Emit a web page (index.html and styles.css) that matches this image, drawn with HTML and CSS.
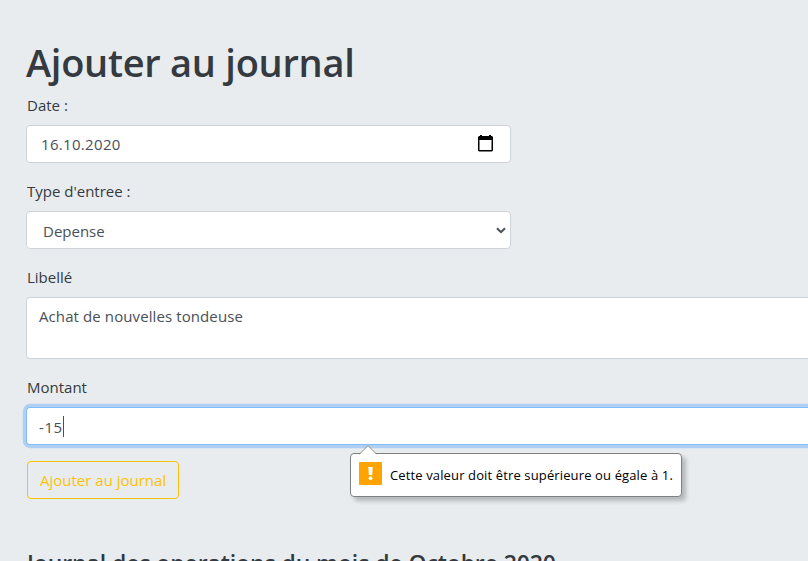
FILE: index.html
```html
<!DOCTYPE html>
<html lang="fr">
<head>
<meta charset="utf-8">
<title>Journal</title>
<link rel="stylesheet" href="styles.css">
</head>
<body>
<main class="page">
  <h1 class="title"><span>Ajouter au journal</span></h1>
  <div class="group">
    <div class="label"><span>Date :</span></div>
    <div class="control half date"><span class="t-value">16.10.2020</span>
      <svg class="calendar" width="15" height="17" viewBox="0 0 15 17"><path d="M2 0h2v1h7V0h2v1h1l1 1v13.5l-1 1H1l-1-1V2l1-1h1zM1.5 5v10h12V5z" fill="#000" fill-rule="evenodd"/></svg>
    </div>
  </div>
  <div class="group">
    <div class="label"><span>Type d'entree :</span></div>
    <div class="control half select"><span class="t-option">Depense</span>
      <svg class="chevron" width="10" height="7" viewBox="0 0 10 7"><path d="M1 1.2l4 4 4-4" fill="none" stroke="#495057" stroke-width="2"/></svg>
    </div>
  </div>
  <div class="group">
    <div class="label"><span>Libellé</span></div>
    <div class="control wide area"><span class="t-area">Achat de nouvelles tondeuse</span></div>
  </div>
  <div class="group">
    <div class="label"><span>Montant</span></div>
    <div class="control wide focused"><span class="t-amount">-15</span><i class="caret"></i>
      <div class="bubble">
        <svg class="arrow" width="18" height="10" viewBox="0 0 18 10"><path d="M0 10L9 1l9 9z" fill="#fff"/><path d="M.5 9L9 .7 17.5 9" fill="none" stroke="#808080" stroke-opacity=".8"/></svg>
        <svg class="warn" width="23" height="23" viewBox="0 0 23 23"><rect width="23" height="23" rx="1" fill="#ffa300"/><path d="M9.3 5h4.4l-.5 8H9.8z" fill="#fff"/><circle cx="11.5" cy="16.2" r="1.9" fill="#fff"/></svg>
        <span class="t-bubble">Cette valeur doit être supérieure ou égale à 1.</span>
      </div>
    </div>
  </div>
  <button class="submit"><span>Ajouter au journal</span></button>
  <h4 class="subtitle"><span>Journal des operations du mois de Octobre 2020</span></h4>
</main>
</body>
</html>
```
FILE: styles.css
```css
* { box-sizing: border-box; }
html { overflow: hidden; }
body {
  margin: 0;
  height: 561px;
  overflow: hidden;
  background: #e8ecef;
  color: #343a40;
  font: 15px/24px "Open Sans", "Noto Sans", sans-serif;
}
.page { height: 561px; overflow: hidden; padding: 37px 0 0 26px; }
.title { margin: 0 0 8px; font-size: 38px; line-height: 51px; height: 48px; font-weight: 600; letter-spacing: -.27px; }
.group { margin-bottom: 16px; }
.label { height: 24px; margin-bottom: 8px; padding-left: 1px; }
.control {
  position: relative;
  display: flex;
  align-items: center;
  height: 38px;
  padding: 0 12px;
  border: 1px solid #ced4da;
  border-radius: 4px;
  background: #fff;
  color: #495057;
}
.half { width: 485px; justify-content: space-between; }
.wide { border-right: 0; border-radius: 4px 0 0 4px; }
.date { padding: 0 17px 0 14px; }
.t-value { letter-spacing: .32px; }
.t-option { position: relative; top: 1px; }
.t-amount { position: relative; top: 1px; letter-spacing: .6px; }
.t-area { letter-spacing: .1px; }
.calendar { margin-top: -2px; }
.select { padding: 0 4px 0 16px; }
.area { height: 62px; align-items: flex-start; padding-top: 6px; }
.focused { border-color: #80bdff; box-shadow: 0 0 0 3.2px #b0cff3; }
.caret { width: 1px; height: 21px; background: #495057; }
.bubble {
  position: absolute;
  left: 323px;
  top: 45px;
  display: flex;
  align-items: center;
  width: 332px;
  height: 44px;
  padding: 0 8px 4px;
  gap: 8px;
  border: 1px solid #808080;
  border-radius: 4px;
  background: #fff;
  box-shadow: 4px 4px 4px rgba(0, 0, 0, .22);
  color: #000;
  font-size: 13px;
  letter-spacing: .13px;
  white-space: nowrap;
}
.arrow { position: absolute; left: 8px; top: -9px; }
.t-bubble { position: relative; top: 2px; }
.submit {
  display: block;
  width: 152px;
  height: 38px;
  margin: 0 0 0 1px;
  padding: 0 0 0 12px;
  border: 1px solid #ffc107;
  border-radius: 4px;
  background: transparent;
  color: #ffc107;
  font: inherit;
  text-align: left;
  white-space: nowrap;
}
.subtitle { margin: 50px 0 0 1px; font-size: 23px; line-height: 29px; font-weight: 600; letter-spacing: -.1px; white-space: nowrap; }
```
